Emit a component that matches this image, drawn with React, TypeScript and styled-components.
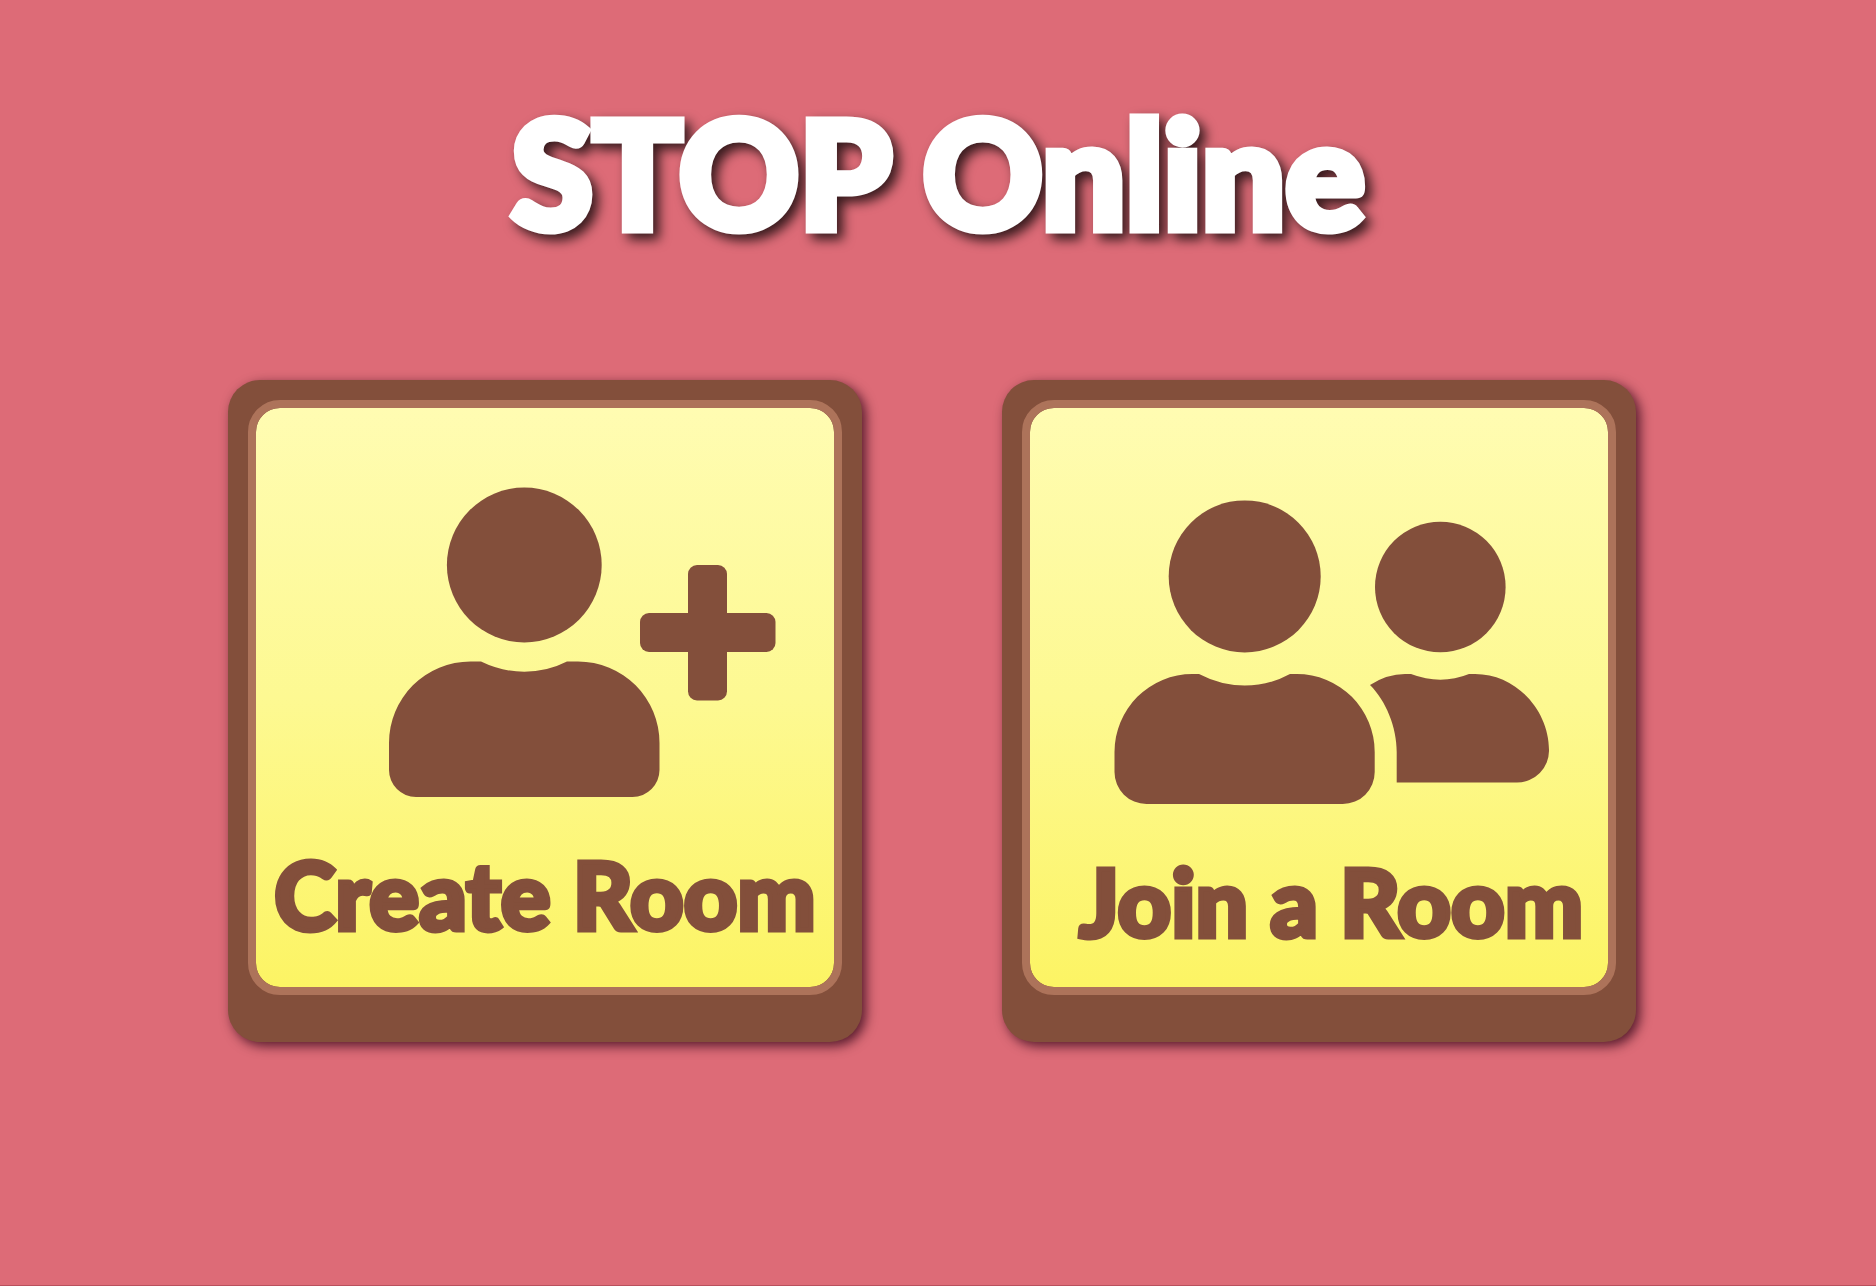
import React from "react";
import styled, { createGlobalStyle } from "styled-components";

const brown = "#834f3b";

const GlobalStyle = createGlobalStyle`
  *, *::before, *::after { box-sizing: border-box; }
  body { margin: 0; background: #dd6b77; }
`;

const Page = styled.main`
  min-height: 100vh;
  display: flex;
  flex-direction: column;
  align-items: center;
  padding: 92px 12px 48px 0;
  border-bottom: 1px solid #b9505c;
  font-family: Lato, "Open Sans", sans-serif;
`;

const Title = styled.h1`
  margin: 0 0 128px 12px;
  color: #fff;
  font-size: 148px;
  line-height: 160px;
  font-weight: 900;
  text-align: center;
  -webkit-text-stroke: 9px #fff;
  filter: drop-shadow(6px 6px 6px rgba(0, 0, 0, 0.75));
`;

const Choices = styled.div`
  width: 100%;
  display: flex;
  flex-wrap: wrap;
  justify-content: center;
  gap: 48px 140px;
`;

const Card = styled.button`
  flex: 0 1 634px;
  display: flex;
  padding: 20px 20px 47px;
  border: 0;
  border-radius: 32px;
  background: ${brown};
  color: ${brown};
  font-family: inherit;
  box-shadow: 4px 4px 12px rgba(40, 0, 20, 0.75);
  cursor: pointer;
`;

const Panel = styled.span<{ $indent?: number }>`
  flex: 1;
  min-width: 0;
  min-height: 595px;
  display: flex;
  flex-direction: column;
  align-items: center;
  justify-content: center;
  gap: 48px;
  padding-top: 32px;
  padding-left: ${(p) => p.$indent ?? 0}px;
  border: 8px solid #ad735a;
  border-radius: 32px;
  background: linear-gradient(#fffcb2, #fdf992 50%, #fcf464) padding-box;
`;

const Picture = styled.svg<{ $width: number }>`
  display: block;
  width: ${(p) => p.$width}px;
  max-width: 100%;
  height: auto;
  flex: none;
  fill: currentColor;
`;

const Label = styled.span`
  font-size: 93px;
  line-height: 96px;
  font-weight: 900;
  white-space: nowrap;
  -webkit-text-stroke: 5px ${brown};
`;

function AddPerson() {
  return (
    <Picture $width={464} viewBox="313 486 464 312" aria-hidden="true">
      <circle cx="524.3" cy="565" r="77.4" />
      <path d="M470.5 661.5 H481 Q502 671.7 524.3 671.7 Q547 671.7 567 661.5 H578 A81.5 81.5 0 0 1 659.5 743 V770 A27 27 0 0 1 632.5 797 H416 A27 27 0 0 1 389 770 V743 A81.5 81.5 0 0 1 470.5 661.5 Z" />
      <rect x="640" y="613" width="135.5" height="39" rx="9" />
      <rect x="688" y="565" width="39" height="135.5" rx="9" />
    </Picture>
  );
}

function TwoPeople() {
  return (
    <Picture $width={436} viewBox="1113 478 436 327" aria-hidden="true">
      <circle cx="1244.7" cy="576.4" r="76" />
      <path d="M1192.5 674 H1199 Q1221 685.5 1244.7 685.5 Q1269 685.5 1290 674 H1296.7 A78 78 0 0 1 1374.7 752 V772 A32 32 0 0 1 1342.7 804 H1146.5 A32 32 0 0 1 1114.5 772 V752 A78 78 0 0 1 1192.5 674 Z" />
      <circle cx="1440.3" cy="587" r="65.3" />
      <path d="M1370 685 Q1387 674 1405 674 H1411 Q1426 679.7 1440.3 679.7 Q1455 679.7 1469 674 H1475 C1516 674 1549 710 1549 750 A32 32 0 0 1 1517 782.5 H1396.7 V752 C1396.7 727 1386 701 1370 685 Z" />
    </Picture>
  );
}

export default function App() {
  return (
    <>
      <GlobalStyle />
      <Page>
        <Title>STOP Online</Title>
        <Choices>
          <Card type="button">
            <Panel>
              <AddPerson />
              <Label>Create Room</Label>
            </Panel>
          </Card>
          <Card type="button">
            <Panel $indent={24}>
              <TwoPeople />
              <Label>Join a Room</Label>
            </Panel>
          </Card>
        </Choices>
      </Page>
    </>
  );
}
